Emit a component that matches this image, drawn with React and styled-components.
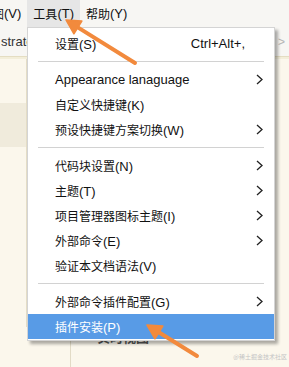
import React from "react";
import styled, { createGlobalStyle } from "styled-components";

const GlobalStyle = createGlobalStyle`
  html, body {
    margin: 0;
    padding: 0;
    overflow: hidden;
  }
  body {
    font-family: "Liberation Sans", "Noto Sans CJK SC", sans-serif;
    font-size: 13px;
    color: #111;
  }
`;

const Window = styled.div`
  position: relative;
  width: 289px;
  height: 367px;
  overflow: hidden;
  background: #fbf7ec;
  display: flex;
  flex-direction: column;
`;

const MenuBar = styled.div`
  height: 27px;
  display: flex;
  align-items: stretch;
  background: #f7f6f3;
`;

const BarItem = styled.div`
  display: flex;
  align-items: center;
  padding: 0 6px;
  margin-left: ${(p) => p.$shift || 0}px;
  background: ${(p) => (p.$open ? "#e6e6e6" : "transparent")};
  white-space: nowrap;
`;

const Han = styled.span`
  font-family: "Noto Sans CJK SC", sans-serif;
  font-size: 12px;
`;

const ToolRow = styled.div`
  height: 29px;
  display: flex;
  align-items: center;
  justify-content: space-between;
  padding: 0 4px 0 1px;
  background: #f7f6f3;
  border-bottom: 1px solid #e4ddc2;
  color: #333;
`;

const FaintChevron = styled.span`
  color: #b5b5b5;
  font-size: 12px;
`;

const Main = styled.div`
  flex: 1;
  display: flex;
  flex-direction: column;
  border-top: 2px solid #f3eed9;
`;

const Body = styled.div`
  flex: 1;
  display: flex;
`;

const SidePanel = styled.div`
  width: 26px;
  border-right: 1px solid #e4ddc6;
  padding-top: 44px;
`;

const SideBand = styled.div`
  height: 44px;
  background: #f0ebdc;
`;

const BottomRow = styled.div`
  height: 40px;
  display: flex;
`;

const BottomLead = styled.div`
  width: 70px;
  border-right: 1px solid #e2dbc6;
`;

const BottomLabel = styled.div`
  padding: 0 0 0 26px;
  font-family: "Noto Sans CJK SC", sans-serif;
  font-size: 13px;
  font-weight: bold;
  color: #555;
`;

const Menu = styled.div`
  position: absolute;
  left: 27px;
  top: 27px;
  width: 246px;
  padding: 3px 0 1px;
  background: #fff;
  border: 1px solid #d4d4d4;
  box-shadow: 3px 3px 3px rgba(0, 0, 0, 0.32);
`;

const Row = styled.div`
  height: 25px;
  display: flex;
  align-items: center;
  padding: 0 11px 0 27px;
  background: ${(p) => (p.$active ? "#589be6" : "transparent")};
  color: ${(p) => (p.$active ? "#fff" : "#111")};
  white-space: nowrap;
`;

const Label = styled.span`
  flex: 1;
`;

const Shortcut = styled.span``;

const ArrowSlot = styled.span`
  width: 18px;
  display: flex;
  justify-content: flex-end;
  align-items: center;
`;

const Separator = styled.div`
  height: 11px;
  display: flex;
  align-items: center;
  padding: 0 10px;
  &::after {
    content: "";
    flex: 1;
    height: 1px;
    background: #d2d2d2;
  }
`;

const Overlay = styled.svg`
  position: absolute;
  left: 0;
  top: 0;
  pointer-events: none;
`;

const Watermark = styled.div`
  position: absolute;
  right: 2px;
  bottom: 6px;
  font-family: "Noto Sans CJK SC", sans-serif;
  font-size: 6px;
  color: #c4c4c4;
`;

function Chevron() {
  return (
    <svg width="7" height="11" viewBox="0 0 7 11">
      <polyline points="1,1 6,5.5 1,10" fill="none" stroke="#222" strokeWidth="1.3" />
    </svg>
  );
}

const items = [
  { han: "设置", key: "S", shortcut: "Ctrl+Alt+," },
  "sep",
  { text: "Appearance lanaguage", sub: true },
  { han: "自定义快捷键", key: "K" },
  { han: "预设快捷键方案切换", key: "W", sub: true },
  "sep",
  { han: "代码块设置", key: "N", sub: true },
  { han: "主题", key: "T", sub: true },
  { han: "项目管理器图标主题", key: "I", sub: true },
  { han: "外部命令", key: "E", sub: true },
  { han: "验证本文档语法", key: "V" },
  "sep",
  { han: "外部命令插件配置", key: "G", sub: true },
  { han: "插件安装", key: "P", active: true },
];

function ArrowMark({ tip, tail }) {
  const dx = tip[0] - tail[0];
  const dy = tip[1] - tail[1];
  const len = Math.hypot(dx, dy);
  const ux = dx / len;
  const uy = dy / len;
  const bx = tip[0] - ux * 14;
  const by = tip[1] - uy * 14;
  const px = -uy * 7.5;
  const py = ux * 7.5;
  return (
    <g fill="#f28a3d" stroke="#f28a3d" strokeLinecap="round" strokeLinejoin="round">
      <line x1={tail[0]} y1={tail[1]} x2={bx + ux * 2} y2={by + uy * 2} strokeWidth="4" />
      <polygon points={`${tip[0]},${tip[1]} ${bx + px},${by + py} ${bx - px},${by - py}`} strokeWidth="1.5" />
    </g>
  );
}

export default function App() {
  return (
    <>
      <GlobalStyle />
      <Window>
        <MenuBar>
          <BarItem $shift={-26}>
            <Han>视图</Han>(V)
          </BarItem>
          <BarItem $open>
            <Han>工具</Han>(T)
          </BarItem>
          <BarItem>
            <Han>帮助</Han>(Y)
          </BarItem>
        </MenuBar>
        <ToolRow>
          <span>strate</span>
          <FaintChevron>&gt;</FaintChevron>
        </ToolRow>
        <Main>
          <Body>
            <SidePanel>
              <SideBand />
            </SidePanel>
          </Body>
          <BottomRow>
            <BottomLead />
            <BottomLabel>实时视图</BottomLabel>
          </BottomRow>
        </Main>

        <Menu>
          {items.map((it, i) =>
            it === "sep" ? (
              <Separator key={i} />
            ) : (
              <Row key={i} $active={it.active}>
                <Label>
                  {it.text ? it.text : (
                    <>
                      <Han>{it.han}</Han>({it.key})
                    </>
                  )}
                </Label>
                {it.shortcut && <Shortcut>{it.shortcut}</Shortcut>}
                <ArrowSlot>{it.sub && <Chevron />}</ArrowSlot>
              </Row>
            )
          )}
        </Menu>

        <Watermark>@稀土掘金技术社区</Watermark>

        <Overlay width="289" height="367" viewBox="0 0 289 367">
          <ArrowMark tip={[66, 20]} tail={[135, 63]} />
          <ArrowMark tip={[147, 325]} tail={[197, 356]} />
        </Overlay>
      </Window>
    </>
  );
}
